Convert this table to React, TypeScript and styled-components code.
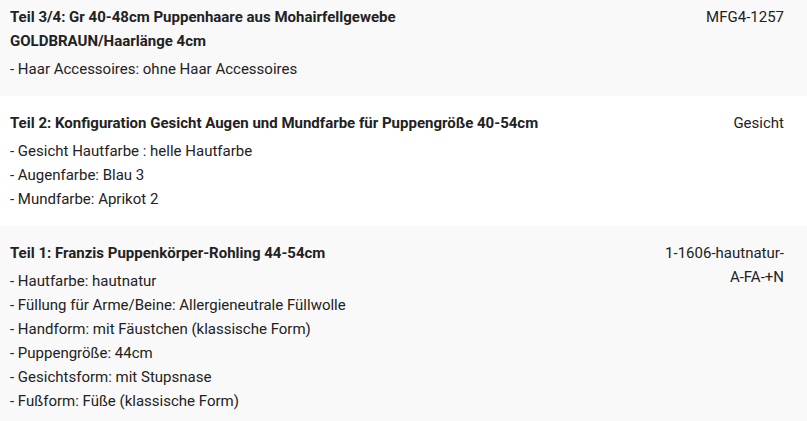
import styled, { createGlobalStyle } from 'styled-components';

const GlobalStyle = createGlobalStyle`
  html, body {
    margin: 0;
    padding: 0;
    background: #fff;
    overflow: hidden;
  }
  body {
    font-family: Roboto, "Liberation Sans", sans-serif;
    font-size: 15px;
    line-height: 24px;
    color: #222;
  }
`;

interface Part {
  title: string;
  options: string[];
  sku: string;
}

const parts: Part[] = [
  {
    title: 'Teil 3/4: Gr 40-48cm Puppenhaare aus Mohairfellgewebe GOLDBRAUN/Haarlänge 4cm',
    options: ['- Haar Accessoires: ohne Haar Accessoires'],
    sku: 'MFG4-1257',
  },
  {
    title: 'Teil 2: Konfiguration Gesicht Augen und Mundfarbe für Puppengröße 40-54cm',
    options: [
      '- Gesicht Hautfarbe : helle Hautfarbe',
      '- Augenfarbe: Blau 3',
      '- Mundfarbe: Aprikot 2',
    ],
    sku: 'Gesicht',
  },
  {
    title: 'Teil 1: Franzis Puppenkörper-Rohling 44-54cm',
    options: [
      '- Hautfarbe: hautnatur',
      '- Füllung für Arme/Beine: Allergieneutrale Füllwolle',
      '- Handform: mit Fäustchen (klassische Form)',
      '- Puppengröße: 44cm',
      '- Gesichtsform: mit Stupsnase',
      '- Fußform: Füße (klassische Form)',
    ],
    sku: '1-1606-hautnatur-A-FA-+N',
  },
];

export default function App() {
  return (
    <>
      <GlobalStyle />
      <List>
        {parts.map((part, i) => (
          <Row key={part.sku} $striped={i % 2 === 0}>
            <Details>
              <Title>{part.title}</Title>
              <Options>
                {part.options.map((o) => (
                  <li key={o}>{o}</li>
                ))}
              </Options>
            </Details>
            <Sku>{part.sku}</Sku>
          </Row>
        ))}
      </List>
    </>
  );
}

const List = styled.div`
  display: flex;
  flex-direction: column;
  margin-top: -10px;
`;

const Row = styled.div<{ $striped: boolean }>`
  display: flex;
  align-items: flex-start;
  gap: 16px;
  padding: 15px 23px 15px 10px;
  background: ${(p) => (p.$striped ? '#f9f9f9' : '#fff')};
`;

const Details = styled.div`
  flex: 1;
  display: flex;
  flex-direction: column;
  gap: 4px;
`;

const Title = styled.div`
  font-weight: 700;
  max-width: 540px;
`;

const Options = styled.ul`
  list-style: none;
  margin: 0;
  padding: 0;
`;

const Sku = styled.div`
  width: 124px;
  text-align: right;
  flex-shrink: 0;
`;
